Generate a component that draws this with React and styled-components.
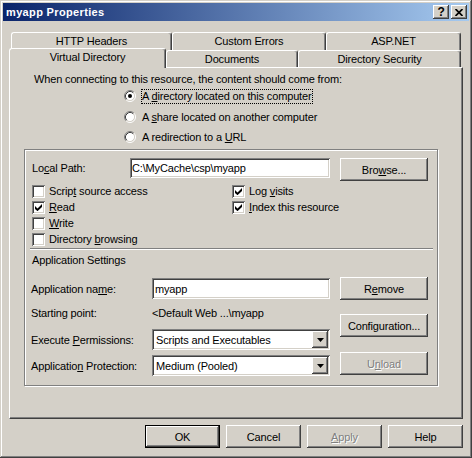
import styled, { createGlobalStyle } from 'styled-components';

const face = '#D4D0C8';
const shadow = '#808080';
const dark = '#404040';
const light = '#FFFFFF';

const raised = `inset -1px -1px ${dark}, inset 1px 1px ${light}, inset -2px -2px ${shadow}, inset 2px 2px ${face}`;
const sunken = `inset 1px 1px ${shadow}, inset -1px -1px ${light}, inset 2px 2px ${dark}, inset -2px -2px ${face}`;

const GlobalStyle = createGlobalStyle`
  html, body { margin: 0; padding: 0; background: ${face}; }
  body {
    font-family: "Liberation Sans", Arial, sans-serif;
    font-size: 11px;
    letter-spacing: -0.15px;
    color: #000;
  }
  * { box-sizing: border-box; }
`;

const Window = styled.div`
  width: 472px;
  height: 458px;
  padding: 3px;
  background: ${face};
  box-shadow: inset -1px -1px ${dark}, inset 1px 1px ${face}, inset -2px -2px ${shadow}, inset 2px 2px ${light};
  display: flex;
  flex-direction: column;
`;

const TitleBar = styled.div`
  height: 18px;
  display: flex;
  align-items: center;
  padding: 0 2px 0 3px;
  background: linear-gradient(to right, #0A246A, #A6CAF0);
  color: #fff;
  font-weight: bold;
  font-size: 11px;
`;

const Caption = styled.div`
  flex: 1;
  line-height: 18px;
  letter-spacing: 0.35px;
`;

const CaptionButton = styled.div`
  width: 16px;
  height: 14px;
  background: ${face};
  box-shadow: ${raised};
  display: flex;
  align-items: center;
  justify-content: center;
  color: #000;
  font-size: 12px;
  font-weight: bold;
  line-height: 14px;
  & + & { margin-left: 2px; }
`;

const Body = styled.div`
  flex: 1;
  display: flex;
  flex-direction: column;
  padding: 11px 6px 0 6px;
`;

const TabRow = styled.div`
  display: flex;
  align-items: flex-end;
  height: ${p => p.$h}px;
  padding-left: ${p => p.$indent || 0}px;
`;

const Tab = styled.div`
  width: ${p => p.$w}px;
  height: ${p => (p.$active ? 20 : p.$h)}px;
  margin-bottom: ${p => (p.$active ? -1 : 0)}px;
  position: ${p => (p.$active ? 'relative' : 'static')};
  z-index: ${p => (p.$active ? 2 : 0)};
  background: ${face};
  border-top: 1px solid ${light};
  border-left: 1px solid ${light};
  border-right: 1px solid ${dark};
  border-radius: 3px 3px 0 0;
  box-shadow: inset -1px 0 ${shadow};
  display: flex;
  justify-content: center;
  padding-top: 2px;
  line-height: 13px;
`;

const Page = styled.div`
  width: 454px;
  height: 352px;
  border-top: 1px solid ${light};
  border-left: 1px solid ${light};
  border-right: 1px solid ${dark};
  border-bottom: 1px solid ${dark};
  box-shadow: inset -1px -1px ${shadow};
  padding-top: 5px;
  display: flex;
  flex-direction: column;
`;

const Intro = styled.div`
  padding-left: 24px;
  line-height: 13px;
`;

const RadioList = styled.div`
  padding-left: 114px;
  display: flex;
  flex-direction: column;
`;

const RadioRow = styled.div`
  height: 20px;
  display: flex;
  align-items: center;
  margin-bottom: ${p => p.$after || 0}px;
`;

const RadioLabel = styled.span`
  margin-left: 5px;
  border: 1px ${p => (p.$focus ? 'dotted #000' : 'solid transparent')};
  line-height: 13px;
  padding-right: 1px;
`;

const Key = styled.span`
  text-decoration: underline;
  text-underline-offset: 1px;
`;

const Group = styled.div`
  margin: 2px 0 0 14px;
  width: 414px;
  height: 237px;
  border: 1px solid ${shadow};
  box-shadow: inset 1px 1px ${light}, 1px 1px ${light};
  padding: 8px 0 0 7px;
  display: flex;
  flex-direction: column;
`;

const PathRow = styled.div`
  display: flex;
  align-items: flex-start;
  height: 23px;
`;

const Label = styled.div`
  width: ${p => p.$w}px;
  line-height: ${p => p.$lh || 20}px;
  white-space: nowrap;
`;

const TextBox = styled.div`
  width: ${p => p.$w}px;
  height: ${p => p.$h || 20}px;
  background: #fff;
  box-shadow: ${sunken};
  padding: 0 0 0 ${p => p.$pad || 2}px;
  display: flex;
  align-items: center;
  white-space: nowrap;
`;

const Button = styled.div`
  width: ${p => p.$w || 88}px;
  height: 23px;
  margin-left: ${p => p.$ml || 0}px;
  margin-top: ${p => p.$mt || 0}px;
  background: ${face};
  box-shadow: ${p =>
    p.$default
      ? `inset -1px -1px #000, inset 1px 1px #000, inset -2px -2px ${dark}, inset 2px 2px ${light}, inset -3px -3px ${shadow}`
      : raised};
  display: flex;
  align-items: center;
  justify-content: center;
  color: ${p => (p.$disabled ? shadow : '#000')};
  text-shadow: ${p => (p.$disabled ? `1px 1px ${light}` : 'none')};
  flex-shrink: 0;
  white-space: pre;
`;

const CheckGrid = styled.div`
  margin-top: 2px;
  display: grid;
  grid-template-columns: 200px auto;
  grid-auto-rows: 16px;
`;

const CheckRow = styled.div`
  display: flex;
  align-items: center;
  white-space: nowrap;
`;

const Box = styled.span`
  width: 13px;
  height: 13px;
  background: #fff;
  box-shadow: ${sunken};
  display: flex;
  align-items: center;
  justify-content: center;
  margin-right: 4px;
  flex-shrink: 0;
`;

const Separator = styled.div`
  margin: 1px 0 0 -2px;
  width: 403px;
  height: 2px;
  border-top: 1px solid ${shadow};
  border-bottom: 1px solid ${light};
`;

const SectionTitle = styled.div`
  margin-top: 3px;
  line-height: 14px;
`;

const AppSection = styled.div`
  margin-top: 10px;
  display: flex;
`;

const FieldColumn = styled.div`
  margin-left: -1px;
  width: 299px;
  display: flex;
  flex-direction: column;
  padding-top: 1px;
`;

const FieldRow = styled.div`
  height: 21px;
  margin-top: ${p => p.$mt || 0}px;
  display: flex;
  align-items: center;
`;

const ButtonColumn = styled.div`
  margin-left: 10px;
  display: flex;
  flex-direction: column;
`;

const Combo = styled.div`
  width: 178px;
  height: 21px;
  background: #fff;
  box-shadow: ${sunken};
  padding: 2px;
  display: flex;
  align-items: center;
`;

const ComboText = styled.div`
  flex: 1;
  padding-left: 2px;
  white-space: nowrap;
`;

const ComboArrow = styled.div`
  width: 16px;
  height: 17px;
  background: ${face};
  box-shadow: ${raised};
  display: flex;
  align-items: center;
  justify-content: center;
`;

const ButtonBar = styled.div`
  margin-top: 6px;
  display: flex;
  justify-content: flex-end;
  gap: 6px;
`;

const Radio = ({ checked }) => (
  <svg width="12" height="12" viewBox="0 0 12 12">
    <circle cx="6" cy="6" r="4.5" fill="#fff" />
    <path d="M2.11 9.89 A5.5 5.5 0 0 1 9.89 2.11" stroke={shadow} fill="none" />
    <path d="M9.89 2.11 A5.5 5.5 0 0 1 2.11 9.89" stroke={light} fill="none" />
    <path d="M2.82 9.18 A4.5 4.5 0 0 1 9.18 2.82" stroke={dark} fill="none" />
    <path d="M9.18 2.82 A4.5 4.5 0 0 1 2.82 9.18" stroke={face} fill="none" />
    {checked && <circle cx="6" cy="6" r="2" fill="#000" />}
  </svg>
);

const Check = ({ checked, children }) => (
  <CheckRow>
    <Box>
      {checked && (
        <svg width="7" height="7" viewBox="0 0 7 7">
          <polygon points="0,2 2.5,4.5 7,0 7,3 2.5,7.2 0,5" fill="#000" />
        </svg>
      )}
    </Box>
    <span>{children}</span>
  </CheckRow>
);

const DropArrow = () => (
  <ComboArrow>
    <svg width="7" height="4" viewBox="0 0 7 4">
      <polygon points="0,0 7,0 3.5,4" fill="#000" />
    </svg>
  </ComboArrow>
);

export default function App() {
  return (
    <>
      <GlobalStyle />
      <Window>
        <TitleBar>
          <Caption>myapp Properties</Caption>
          <CaptionButton>?</CaptionButton>
          <CaptionButton>
            <svg width="8" height="7" viewBox="0 0 8 7">
              <path d="M0.5 0 L7.5 7 M7.5 0 L0.5 7" stroke="#000" strokeWidth="1.7" />
            </svg>
          </CaptionButton>
        </TitleBar>
        <Body>
          <TabRow $h={18} $indent={2}>
            <Tab $w={161} $h={18}>HTTP Headers</Tab>
            <Tab $w={154} $h={18}>Custom Errors</Tab>
            <Tab $w={135} $h={18}>ASP.NET</Tab>
          </TabRow>
          <TabRow $h={17}>
            <Tab $w={157} $active>Virtual Directory</Tab>
            <Tab $w={132} $h={17}>Documents</Tab>
            <Tab $w={163} $h={17}>Directory Security</Tab>
          </TabRow>
          <Page>
            <Intro>When connecting to this resource, the content should come from:</Intro>
            <RadioList>
              <RadioRow $after={1}>
                <Radio checked />
                <RadioLabel $focus>A <Key>d</Key>irectory located on this computer</RadioLabel>
              </RadioRow>
              <RadioRow>
                <Radio />
                <RadioLabel>A <Key>s</Key>hare located on another computer</RadioLabel>
              </RadioRow>
              <RadioRow>
                <Radio />
                <RadioLabel>A redirection to a <Key>U</Key>RL</RadioLabel>
              </RadioRow>
            </RadioList>
            <Group>
              <PathRow>
                <Label $w={98}>Lo<Key>c</Key>al Path:</Label>
                <TextBox $w={200} $pad={2}>C:\MyCache\csp\myapp</TextBox>
                <Button $ml={10}><span>Bro<Key>w</Key>se...</span></Button>
              </PathRow>
              <CheckGrid>
                <Check>Scrip<Key>t</Key> source access</Check>
                <Check checked>Log <Key>v</Key>isits</Check>
                <Check checked><Key>R</Key>ead</Check>
                <Check checked><Key>I</Key>ndex this resource</Check>
                <Check><Key>W</Key>rite</Check>
                <div />
                <Check>Directory <Key>b</Key>rowsing</Check>
              </CheckGrid>
              <Separator />
              <SectionTitle>Application Settings</SectionTitle>
              <AppSection>
                <FieldColumn>
                  <FieldRow>
                    <Label $w={121}>Application na<Key>m</Key>e:</Label>
                    <TextBox $w={178} $h={21} $pad={3}>myapp</TextBox>
                  </FieldRow>
                  <FieldRow $mt={3}>
                    <Label $w={121}>Starting point:</Label>
                    <span>&lt;Default Web ...\myapp</span>
                  </FieldRow>
                  <FieldRow $mt={6}>
                    <Label $w={121}>Execute <Key>P</Key>ermissions:</Label>
                    <Combo>
                      <ComboText>Scripts and Executables</ComboText>
                      <DropArrow />
                    </Combo>
                  </FieldRow>
                  <FieldRow $mt={5}>
                    <Label $w={121}>Applicatio<Key>n</Key> Protection:</Label>
                    <Combo>
                      <ComboText>Medium (Pooled)</ComboText>
                      <DropArrow />
                    </Combo>
                  </FieldRow>
                </FieldColumn>
                <ButtonColumn>
                  <Button><span>R<Key>e</Key>move</span></Button>
                  <Button $mt={14}><span>Confi<Key>g</Key>uration...</span></Button>
                  <Button $mt={15} $disabled><span>U<Key>n</Key>load</span></Button>
                </ButtonColumn>
              </AppSection>
            </Group>
          </Page>
          <ButtonBar>
            <Button $w={75} $default>OK</Button>
            <Button $w={75}>Cancel</Button>
            <Button $w={75} $disabled><span><Key>A</Key>pply</span></Button>
            <Button $w={75}>Help</Button>
          </ButtonBar>
        </Body>
      </Window>
    </>
  );
}
